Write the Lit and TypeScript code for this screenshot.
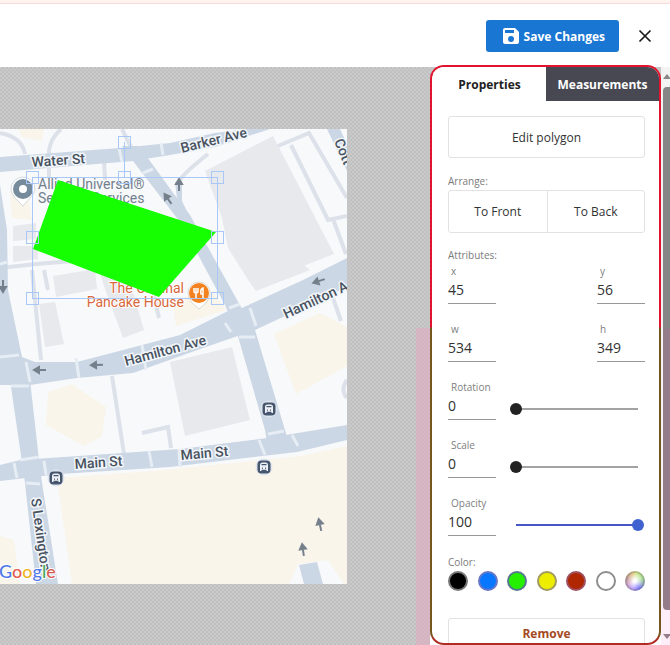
import { LitElement, html, css, svg } from "lit";
import { customElement, property, state } from "lit/decorators.js";
import { classMap } from "lit/directives/class-map.js";

const arrow = (x: number, y: number, angle: number) => svg`
  <path class="arrow" transform="translate(${x} ${y}) rotate(${angle})" d="M0 6V-2M0 -6L-3 -1H3Z"/>`;

const busStop = (x: number, y: number) => svg`
  <g transform="translate(${x} ${y})">
    <circle r="8.5" fill="#dfe5ee"/>
    <rect x="-6.5" y="-6.5" width="13" height="13" rx="4" fill="#46566f"/>
    <path d="M-4 4V-2Q-4 -4.500 -1.500 -4.500H1.500Q4 -4.500 4 -2V4H2.500V2.800H-2.500V4Z" fill="#eef2f7"/>
    <path d="M-2.500 -2.300H2.500M-2 1.200H-1M1 1.200H2" stroke="#46566f" stroke-width="1.200"/>
  </g>`;

const handles = [
  [124, 142], [124, 177], [217, 177], [32, 177], [32, 237], [217, 237], [32, 298], [217, 298],
];

@customElement("map-canvas")
export class MapCanvas extends LitElement {
  static styles = css`
    :host { display: flex; min-width: 0; }
    .map { flex: 1; min-width: 0; width: 100%; height: 455px; font-family: Roboto, "Liberation Sans", sans-serif; }
    .arrow { fill: #76808c; stroke: #76808c; stroke-width: 2; }
    .street { fill: #48525f; font-size: 14px; font-weight: 500; stroke: #f2f6fa; stroke-width: 3; paint-order: stroke; }
    .place { fill: #71808c; font-size: 14px; stroke: #f8f9fb; stroke-width: 2; paint-order: stroke; }
    .food { fill: #d9683c; font-size: 14px; stroke: #fff; stroke-width: 2; paint-order: stroke; }
    .brand { font: 500 18px Lato, sans-serif; stroke: #fff; stroke-width: 2; paint-order: stroke; }
    .road { fill: #cbd7e5; }
    .lane { fill: none; stroke: #dce1ea; stroke-width: 4; }
    .crossing { fill: none; stroke: #e6edf4; stroke-width: 3; }
    .block { fill: #e7e9ed; }
    .sand { fill: #f9f5ea; }
  `;

  render() {
    return html`
      <svg class="map" viewBox="0 129 347 455" preserveAspectRatio="xMaxYMid slice" role="img" aria-label="Street map with a green polygon">
        <rect y="129" width="347" height="455" fill="#f8f9fb"/>
        <path class="sand" d="M18 129H44L42 141L22 137ZM10 190L28 196L32 220L12 218ZM172 300L212 290L226 310L176 326ZM48 392L72 384L106 407L102 436L84 446L46 425ZM274 334L320 313L347 327V366L296 394ZM57 478L165 470L300 456L347 446V584H72ZM0 536L14 540L20 584H0Z"/>
        <path fill="#f8f9fb" d="M289 584L298 564L328 560L344 584Z"/>
        <path class="block" d="M205 171L273 136L334 254L252 286L228 248L222 218ZM248 280L300 262L310 270L256 291ZM170 362L232 347L250 420L185 436ZM13 226L36 223V239L13 241ZM13 246H38V259L13 262ZM53 276L95 269L97 289L56 297ZM99 270L128 275L144 330L123 338L106 292ZM39 304L55 302L64 344L45 347Z"/>

        <path class="lane" d="M0 133Q22 137 25 154M49 178V150Q51 138 61 129M122 129L133 151M0 268L36 264L86 260M180 190V180Q184 173 208 154"/>
        <path class="lane" d="M104 160L105 180M32 270L41 360M44 270L48 290M112 376L124 454M142 433L168 427L171 448M278 146L309 133L347 198M291 145L328 220L347 216M333 219L346 254M154 296L159 318M333 298L341 321M347 380Q340 390 347 398"/>

        <path class="road" d="M0 157L120 148L170 143L215 133L246 129H270L215 147L170 155L133 161L0 172Z"/>
        <path class="road" d="M122 146H139L174 194L190 215L241 307L255 330L285 430L290 448H268L265 430L237 333L225 305L196 251L180 222L133 161Z"/>
        <path class="road" d="M175 182H182L182 201L192 222L178 206Z"/>
        <path class="road" d="M327 129H340L347 144V171Z"/>
        <path class="road" d="M0 185L7 230L8 290L22 357L35 362H77L123 350L180 335L230 310L242 308L303 280L347 258V287L255 330L203 348L133 373L77 378L30 385H0Z"/>
        <path class="road" d="M10 380H30L39 460L42 483L58 584H36L25 483Z"/>
        <path class="road" d="M0 465L20 460L180 449L267 438L347 425V440L297 452L170 467L60 474L0 481Z"/>
        <path class="road" d="M299 565L317 562L323 584H304Z"/>
        <path class="crossing" d="M119 148L122 162M161 143L163 155M143 173L153 169M0 357L19 355M26 362L30 382M11 386L29 386M76 358L79 378M142 345L146 370M225 323L231 332M229 308L240 304M250 308L256 326M239 337L255 337M14 463L17 478M20 460L39 457M26 483L40 484M44 461L46 475M149 451L152 467M179 449L180 467M259 440L265 455M268 434L284 431M292 435L298 446M0 264L7 262"/>

        ${arrow(3, 286, 180)} ${arrow(40, 370, -90)} ${arrow(97, 365, -92)}
        ${arrow(168, 199, -35)} ${arrow(179, 185, 0)} ${arrow(319, 281, -108)}
        ${arrow(320, 525, -12)} ${arrow(303, 550, -8)}
        ${busStop(269, 409)} ${busStop(264, 467)} ${busStop(56, 478)}

        <text class="street" transform="translate(32 167) rotate(-4)">Water St</text>
        <text class="street" transform="translate(182 153) rotate(-14)">Barker Ave</text>
        <text class="street" transform="translate(334 141) rotate(68)">Cott</text>
        <text class="street" transform="translate(126 366) rotate(-15)">Hamilton Ave</text>
        <text class="street" transform="translate(286 319) rotate(-25)">Hamilton A</text>
        <text class="street" transform="translate(75 469) rotate(-4)">Main St</text>
        <text class="street" transform="translate(181 460) rotate(-5)">Main St</text>
        <text class="street" transform="translate(31 499) rotate(82)">S Lexington</text>
        <text class="place" x="38" y="189">Allied Universal®</text>
        <text class="place" x="38" y="203">Security Services</text>
        <text class="food" x="184" y="293" text-anchor="end">The Original</text>
        <text class="food" x="184" y="307" text-anchor="end">Pancake House</text>

        <path d="M23 206L15 198Q11 193 11 189A12 12 0 0 1 35 189Q35 193 30 198Z" fill="#fff" stroke="#d5dbe1"/>
        <circle cx="23" cy="189" r="7" fill="#fff" stroke="#768c9c" stroke-width="6"/>
        <path d="M199 309L192 303Q188 298 188 293A11 11 0 0 1 210 293Q210 298 206 303Z" fill="#fff" stroke="#ddd9d5"/>
        <circle cx="199" cy="293" r="10" fill="#f58220"/>
        <path d="M194 288V291Q194 293 196 293V298M196 288V293M198 288V291Q198 293 196 293M203 298V288Q200 289 201 294H203" fill="none" stroke="#fff" stroke-width="1.500"/>

        <polygon points="58,180 216,232 159,297 33,249" fill="#15ff00"/>
        <path d="M32 177H217V298H32ZM124 142V177" fill="none" stroke="#a9c7f7" shape-rendering="crispEdges"/>
        ${handles.map(([x, y]) => svg`<rect x=${x - 6} y=${y - 6} width="12" height="12" fill="none" stroke="#a9c7f7" shape-rendering="crispEdges"/>`)}
        <text class="brand" x="-1" y="578"><tspan fill="#5078e8">G</tspan><tspan fill="#e45d50">o</tspan><tspan fill="#efb52b">o</tspan><tspan fill="#5078e8">g</tspan><tspan fill="#45a85a">l</tspan><tspan fill="#d65b50">e</tspan></text>
      </svg>`;
  }
}

@customElement("number-field")
export class NumberField extends LitElement {
  @property() label = "";
  @property() value = "";

  static styles = css`
    :host { display: block; width: 48px; }
    .label { display: block; padding-left: 3px; font-size: 10px; line-height: 16px; color: #808080; }
    .input {
      display: block; box-sizing: border-box; width: 100%; height: 25px; padding: 0 0 4px;
      border: 0; border-bottom: 1px solid #979797; border-radius: 0; background: none;
      font: 14px "Open Sans", sans-serif; color: #333; outline: none;
    }
  `;

  render() {
    return html`
      <label class="label" for="value">${this.label}</label>
      <input class="input" id="value" inputmode="numeric" .value=${this.value}
        @input=${(e: Event) => (this.value = (e.target as HTMLInputElement).value)}>`;
  }
}

@customElement("app-root")
export class AppRoot extends LitElement {
  @state() private color = "green";

  private sliders = [
    { label: "Rotation", value: "0", max: 360 },
    { label: "Scale", value: "0", max: 100 },
    { label: "Opacity", value: "100", max: 100 },
  ];
  private colors = ["black", "blue", "green", "yellow", "red", "white", "custom"];

  static styles = css`
    :host {
      display: flex; flex-direction: column; height: 100vh; overflow: hidden;
      background: #fff; color: #333; font: 12px "Open Sans", sans-serif;
    }
    button { font: inherit; color: inherit; cursor: pointer; }
    .header {
      display: flex; align-items: center; justify-content: flex-end; gap: 19px; flex: none;
      box-sizing: border-box; height: 67px; padding: 2px 18px 0 0;
      border-top: 3px solid #fff2ef; box-shadow: inset 0 1px #f5deda;
    }
    .save {
      display: flex; align-items: center; justify-content: center; gap: 4px;
      height: 32px; padding: 0 14px 0 16px; border: 0; border-radius: 3px;
      background: #1976d2; color: #fff; font-weight: 700;
    }
    .close { display: flex; padding: 0; border: 0; background: none; }
    .body { display: flex; flex: 1; min-height: 0; }
    .stage {
      display: flex; align-items: center; flex: 1; min-width: 0; padding-right: 83px;
      background:
        linear-gradient(#e8a6c080, #e8a6c080) right 261px / 14px 100% no-repeat,
        repeating-conic-gradient(#c0c0c0 0 25%, #cacaca 0 50%) 0 0 / 4px 4px;
    }
    .stage map-canvas { flex: 1; }
    .panel {
      display: flex; flex-direction: column; flex: none; box-sizing: border-box; width: 231px;
      margin: -2px 0 0; border: 2px solid transparent; border-radius: 14px; overflow: hidden;
      background:
        linear-gradient(#fff, #fff) padding-box,
        linear-gradient(#e2132f 0 262px, #75561f 263px 570px, #b02c22 574px) border-box;
    }
    .sidebar { display: flex; flex: none; background: linear-gradient(#c5c5c5 0 560px, #fff 561px); }
    .tabs { display: grid; grid-template-columns: 1fr 1fr; flex: none; height: 34px; padding-left: 1px; }
    .tab { padding: 0; border: 0; background: #fff; color: #222; font-weight: 700; }
    .tab.dark { background: #484852; color: #fff; }
    .content { display: flex; flex-direction: column; flex: 1; min-height: 0; overflow: hidden; padding: 15px 14px 0 16px; }
    .outline { flex: none; height: 42px; border: 1px solid #e2e2e2; border-radius: 3px; background: #fff; padding: 0; }
    .caption { flex: none; font-size: 10px; line-height: 16px; color: #7c7c7c; }
    .arrange { margin-top: 15px; }
    .pair { display: grid; grid-template-columns: 1fr 1fr; flex: none; box-sizing: border-box; height: 43px; margin-top: 1px; border: 1px solid #e2e2e2; border-radius: 3px; }
    .half { border: 0; background: none; padding: 0; }
    .half + .half { border-left: 1px solid #e2e2e2; }
    .attributes { margin-top: 14px; }
    .fields { display: flex; flex-direction: column; gap: 17px; flex: none; }
    .row { display: flex; justify-content: space-between; }
    .slider {
      flex: 1; min-width: 0; margin: 22px 1px 0 14px; height: 16px; align-self: flex-start;
      appearance: none; color: #222; --line: #a3a3a3;
      background: linear-gradient(var(--line), var(--line)) center / calc(100% - 12px) 2px no-repeat;
    }
    .slider.full { color: #3f62cf; --line: #4656c8; }
    .slider::-webkit-slider-thumb { appearance: none; width: 12px; height: 12px; border-radius: 50%; background: currentColor; }
    .color-caption { margin-top: 18px; }
    .swatches { display: flex; justify-content: space-between; flex: none; margin-top: 1px; }
    .swatch { box-sizing: border-box; width: 20px; height: 20px; padding: 0; border: 2px solid #8e8e8e; border-radius: 50%; }
    .black { background: #000; border-color: #777; }
    .blue { background: #0877ff; border-color: #6877c5; }
    .green { background: #24f000; border-color: #557a8e; }
    .yellow { background: #eded00; border-color: #a19b60; }
    .red { background: #af2600; border-color: #a05060; }
    .white { background: #fff; }
    .custom {
      background: radial-gradient(#fff 10%, #fff0 75%) border-box,
        conic-gradient(#c8e060, #86d068 20%, #4d44ff 42%, #a080ff 55%, #c080c0 68%, #b47870 80%, #e0c850) border-box;
      border-color: #88888866;
    }
    .remove { margin-top: 27px; color: #a44a22; font-weight: 700; line-height: 20px; padding: 0 0 11px; }
    .scroll { display: flex; flex-direction: column; align-items: flex-end; width: 9px; background: linear-gradient(#f3f3f3 0 540px, #ffeefa 541px); }
    .thumb { flex: 1; width: 7px; border-radius: 4px 0 0 4px; background: linear-gradient(#868686 0 241px, #957c8a 242px); }
    .up, .down { display: block; flex: none; width: 7px; height: 20px; }
    .down { height: 35px; }
  `;

  render() {
    return html`
      <header class="header">
        <button class="save">
          <svg width="18" height="18" viewBox="0 0 18 18" aria-hidden="true">
            <path fill="#fff" fill-rule="evenodd" d="M3 1H13L17 5V15Q17 17 15 17H3Q1 17 1 15V3Q1 1 3 1ZM3 3V6H12V3ZM9 9A3 3 0 1 0 9 15A3 3 0 1 0 9 9Z"/>
          </svg>
          Save Changes
        </button>
        <button class="close" aria-label="Close">
          <svg width="14" height="14" viewBox="0 0 14 14"><path d="M1.500 1.500L12.500 12.500M12.500 1.500L1.500 12.500" stroke="#1c1c1c" stroke-width="1.700"/></svg>
        </button>
      </header>
      <main class="body">
        <section class="stage"><map-canvas></map-canvas></section>
        <aside class="sidebar">
          <div class="panel">
            <div class="tabs" role="tablist">
              <button class="tab" role="tab" aria-selected="true">Properties</button>
              <button class="tab dark" role="tab" aria-selected="false">Measurements</button>
            </div>
            <div class="content">
              <button class="outline">Edit polygon</button>
              <div class="caption arrange">Arrange:</div>
              <div class="pair">
                <button class="half">To Front</button>
                <button class="half">To Back</button>
              </div>
              <div class="caption attributes">Attributes:</div>
              <div class="fields">
                <div class="row">
                  <number-field label="x" value="45"></number-field>
                  <number-field label="y" value="56"></number-field>
                </div>
                <div class="row">
                  <number-field label="w" value="534"></number-field>
                  <number-field label="h" value="349"></number-field>
                </div>
                ${this.sliders.map((s) => html`
                  <div class="row">
                    <number-field label=${s.label} value=${s.value}></number-field>
                    <input class=${classMap({ slider: true, full: s.value === "100" })} type="range"
                      aria-label=${s.label} min="0" max=${s.max} .value=${s.value}>
                  </div>`)}
              </div>
              <div class="caption color-caption">Color:</div>
              <div class="swatches">
                ${this.colors.map((c) => html`
                  <button class="swatch ${c}" aria-label=${c} aria-pressed=${this.color === c}
                    @click=${() => (this.color = c)}></button>`)}
              </div>
              <button class="outline remove">Remove</button>
            </div>
          </div>
          <div class="scroll" aria-hidden="true">
            <svg class="up" viewBox="0 0 7 20"><path d="M0 12L4 7L8 12Z" fill="#868686"/></svg>
            <div class="thumb"></div>
            <svg class="down" viewBox="0 0 7 35"><path d="M0 24L4 29L8 24Z" fill="#957c8a"/></svg>
          </div>
        </aside>
      </main>`;
  }
}
